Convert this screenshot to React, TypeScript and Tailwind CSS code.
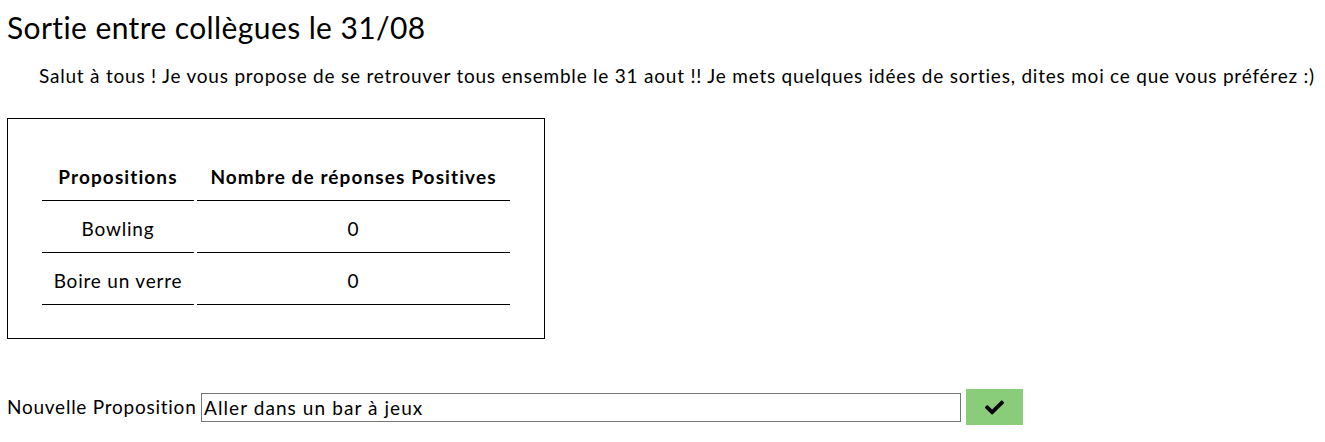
import { FaCheck } from 'react-icons/fa';

const propositions = [
  { name: 'Bowling', count: 0 },
  { name: 'Boire un verre', count: 0 },
];

export default function App() {
  return (
    <div className="px-[7px] pt-[8px] text-black" style={{ fontFamily: 'Lato, "Noto Sans", sans-serif' }}>
      <h1 className="text-[30px] leading-[38px] tracking-[0.4px]">Sortie entre collègues le 31/08</h1>

      <p className="mt-[18px] indent-[32px] text-[19px] leading-[24px] tracking-[0.78px] whitespace-nowrap">
        Salut à tous ! Je vous propose de se retrouver tous ensemble le 31 aout !! Je mets quelques idées de sorties, dites moi ce que vous préférez :)
      </p>

      {/* Tableau des propositions */}
      <div className="mt-[30px] w-[538px] border border-black px-[34px] pt-[33px] pb-[33px]">
        <table className="-mx-[3px] border-separate border-spacing-x-[3px] border-spacing-y-0 text-[19px] tracking-[0.8px]">
          <thead>
            <tr>
              <th className="h-[49px] w-[152px] border-b border-black pt-[2px] font-bold tracking-[1.1px]">Propositions</th>
              <th className="h-[49px] w-[313px] border-b border-black pt-[2px] font-bold tracking-[1.1px]">Nombre de réponses Positives</th>
            </tr>
          </thead>
          <tbody>
            {propositions.map((p) => (
              <tr key={p.name}>
                <td className="h-[52px] border-b border-black pt-[5px] text-center">{p.name}</td>
                <td className="h-[51px] border-b border-black pt-[5px] text-center">{p.count}</td>
              </tr>
            ))}
          </tbody>
        </table>
      </div>

      {/* Nouvelle proposition */}
      <div className="mt-[50px] flex items-center text-[19px] tracking-[0.75px]">
        <label className="w-[189px] whitespace-nowrap">Nouvelle Proposition</label>
        <input
          defaultValue="Aller dans un bar à jeux"
          className="ml-[5px] h-[29px] w-[760px] border border-[#767676] px-[2px] tracking-[1.08px] outline-none"
        />
        <button className="ml-[5px] flex h-[36px] w-[57px] items-center justify-center bg-[#89cd7b]">
          <FaCheck className="h-[19px] w-[19px]" />
        </button>
      </div>
    </div>
  );
}
